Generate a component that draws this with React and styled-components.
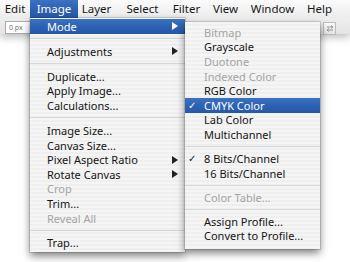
import React from 'react'
import styled, { createGlobalStyle } from 'styled-components'

const GlobalStyle = createGlobalStyle`
  html, body {
    margin: 0;
    padding: 0;
    background: #fff;
  }
  body {
    font-family: "Noto Sans", "DejaVu Sans", sans-serif;
  }
`

const BLUE = 'linear-gradient(to bottom, #3b72c4 0%, #2d62b3 50%, #2658a8 100%)'

const Screen = styled.div`
  position: relative;
  width: 350px;
  height: 262px;
  overflow: hidden;
  background: #fff;
`

const MenuBar = styled.div`
  display: flex;
  height: 18px;
  background: linear-gradient(to bottom, #fbfbfb, #ececec);
  position: relative;
  z-index: 2;
`

const MenuTitle = styled.div`
  width: ${p => p.$w}px;
  flex: none;
  text-align: center;
  font-size: 11.5px;
  line-height: 18px;
  color: ${p => (p.$active ? '#fff' : '#161616')};
  background: ${p => (p.$active ? BLUE : 'transparent')};
`

const Toolbar = styled.div`
  display: flex;
  align-items: center;
  justify-content: space-between;
  height: 16px;
  padding: 0 14px 0 5px;
  background: linear-gradient(to bottom, #eeeeee, #e4e4e4);
  box-shadow: 0 3px 9px rgba(0, 0, 0, 0.28);
  position: relative;
  z-index: 1;
`

const Field = styled.div`
  width: 40px;
  height: 11px;
  margin-top: 3px;
  background: #fff;
  border: 1px solid #aaa;
  font-size: 7px;
  line-height: 11px;
  padding-left: 3px;
  color: #777;
`

const SmallButton = styled.div`
  width: 11px;
  height: 11px;
  margin-top: 4px;
  border: 1px solid #bbb;
  background: linear-gradient(#fafafa, #e2e2e2);
  display: flex;
  align-items: center;
  justify-content: center;
`

const Menu = styled.div`
  position: absolute;
  left: ${p => p.$left}px;
  top: ${p => p.$top}px;
  width: ${p => p.$width}px;
  padding: ${p => p.$pad};
  background: repeating-linear-gradient(to bottom, #f5f5f5 0 2px, #efefef 2px 4px);
  box-shadow: 0 4px 8px rgba(0, 0, 0, 0.5), 0 0 0 1px rgba(0, 0, 0, 0.12);
  z-index: ${p => p.$z};
`

const Row = styled.div`
  display: flex;
  align-items: center;
  height: 14.6px;
  padding: ${p => p.$pad};
  font-size: 11px;
  color: ${p => (p.$active ? '#fff' : p.$disabled ? '#a4a4a4' : '#141414')};
  background: ${p => (p.$active ? BLUE : 'transparent')};
  white-space: nowrap;
`

const Label = styled.span`
  flex: 1;
`

const Check = styled.span`
  width: 16px;
  flex: none;
  font-family: "DejaVu Sans", sans-serif;
  font-size: 10px;
  font-weight: bold;
`

const Arrow = styled.span`
  width: 0;
  height: 0;
  border-top: 4px solid transparent;
  border-bottom: 4px solid transparent;
  border-left: 6px solid ${p => (p.$active ? '#fff' : '#222')};
`

const Separator = styled.div`
  height: ${p => p.$h}px;
  display: flex;
  align-items: center;
  &::after {
    content: '';
    flex: 1;
    height: 1px;
    background: #d6d6d6;
  }
`

const titles = [
  ['Edit', 30],
  ['Image', 48, true],
  ['Layer', 37],
  ['Select', 55],
  ['Filter', 33],
  ['View', 45],
  ['Window', 49],
  ['Help', 45],
]

const imageItems = [
  { label: 'Mode', sub: true, active: true },
  '-',
  { label: 'Adjustments', sub: true },
  '-',
  { label: 'Duplicate...' },
  { label: 'Apply Image...' },
  { label: 'Calculations...' },
  '-',
  { label: 'Image Size...' },
  { label: 'Canvas Size...' },
  { label: 'Pixel Aspect Ratio', sub: true },
  { label: 'Rotate Canvas', sub: true },
  { label: 'Crop', disabled: true },
  { label: 'Trim...' },
  { label: 'Reveal All', disabled: true },
  '-',
  { label: 'Trap...' },
]

const modeItems = [
  { label: 'Bitmap', disabled: true },
  { label: 'Grayscale' },
  { label: 'Duotone', disabled: true },
  { label: 'Indexed Color', disabled: true },
  { label: 'RGB Color' },
  { label: 'CMYK Color', checked: true, active: true },
  { label: 'Lab Color' },
  { label: 'Multichannel' },
  '-',
  { label: '8 Bits/Channel', checked: true },
  { label: '16 Bits/Channel' },
  '-',
  { label: 'Color Table...', disabled: true },
  '-',
  { label: 'Assign Profile...' },
  { label: 'Convert to Profile...' },
]

const ImageMenu = () => (
  <Menu $left={30} $top={18} $width={155} $pad="1px 0 2px" $z={3}>
    {imageItems.map((it, i) =>
      it === '-' ? (
        <Separator key={i} $h={10.4} />
      ) : (
        <Row key={i} $pad="0 7px 0 17px" $active={it.active} $disabled={it.disabled}>
          <Label>{it.label}</Label>
          {it.sub && <Arrow $active={it.active} />}
        </Row>
      )
    )}
  </Menu>
)

const ModeMenu = () => (
  <Menu $left={185} $top={22} $width={135} $pad="3px 0 6px" $z={4}>
    {modeItems.map((it, i) =>
      it === '-' ? (
        <Separator key={i} $h={9.5} />
      ) : (
        <Row key={i} $pad="0 6px 0 3px" $active={it.active} $disabled={it.disabled}>
          <Check>{it.checked ? '✓' : ''}</Check>
          <Label>{it.label}</Label>
        </Row>
      )
    )}
  </Menu>
)

export default function App() {
  return (
    <Screen>
      <GlobalStyle />
      <MenuBar>
        {titles.map(([t, w, a]) => (
          <MenuTitle key={t} $w={w} $active={a}>{t}</MenuTitle>
        ))}
      </MenuBar>
      <Toolbar>
        <Field>0 px</Field>
        <SmallButton>
          <svg width="8" height="7" viewBox="0 0 8 7">
            <path d="M1 2h6M5 0.5l2 1.5-2 1.5M7 5H1M3 3.5L1 5l2 1.5" stroke="#999" strokeWidth="1" fill="none" />
          </svg>
        </SmallButton>
      </Toolbar>
      <ImageMenu />
      <ModeMenu />
    </Screen>
  )
}
